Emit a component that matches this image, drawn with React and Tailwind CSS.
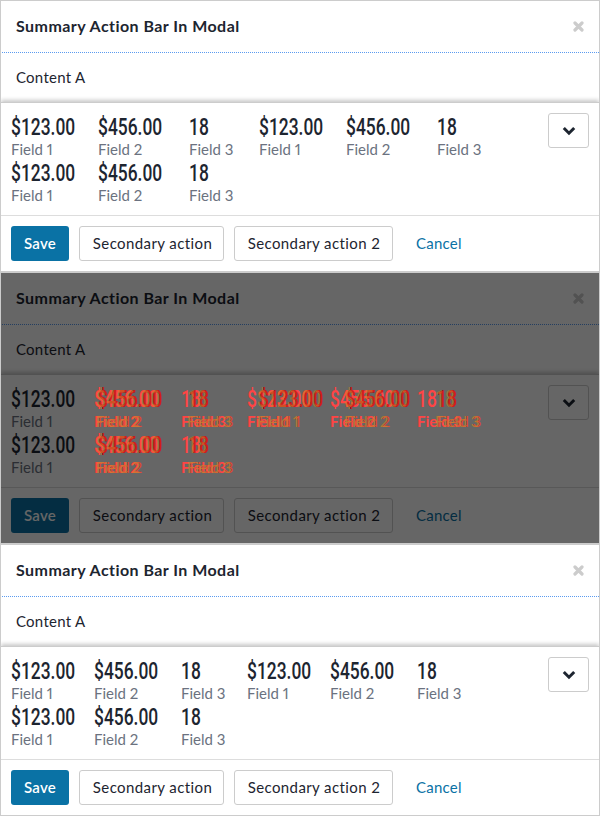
import React from "react";

const body = { fontFamily: '"Lato", "Noto Sans", sans-serif' };
const num = { fontFamily: '"Roboto", sans-serif' };

const ITEMS = [
  ["$123.00", "Field 1"], ["$456.00", "Field 2"], ["18", "Field 3"],
  ["$123.00", "Field 1"], ["$456.00", "Field 2"], ["18", "Field 3"],
  ["$123.00", "Field 1"], ["$456.00", "Field 2"], ["18", "Field 3"],
];

function Items({ wide, valueClass, labelClass, skipFirst }) {
  const widths = wide
    ? ["w-[87px]", "w-[91px]", "w-[70px]"]
    : ["w-[83px]", "w-[87px]", "w-[66px]"];
  return (
    <div className="flex w-[526px] flex-wrap pl-[11px]">
      {ITEMS.map(([v, l], i) => (
        <div key={i} className={`${widths[i % 3]} h-[46px] ${skipFirst && i % 6 === 0 ? "invisible" : ""}`}>
          <div className="h-[25px] whitespace-nowrap leading-[25px]">
            <span className={`inline-block origin-left scale-x-[0.725] text-[24px] font-medium leading-[27px] ${valueClass}`} style={num}>{v}</span>
          </div>
          <div className={`h-[21px] whitespace-nowrap text-[15px] leading-[21px] proportional-nums ${labelClass}`} style={body}>{l}</div>
        </div>
      ))}
    </div>
  );
}

function Panel({ wide, dimmed }) {
  return (
    <div className="relative h-[272px] overflow-hidden border border-[#ccc] bg-white text-[#1d2530]" style={body}>
      <div className="flex h-[51px] items-center justify-between pl-[15px] pr-[15px]">
        <span className="mb-[2px] text-[16px] font-bold tracking-[0.45px]">Summary Action Bar In Modal</span>
        <svg width="11" height="11" viewBox="0 0 11 11" className="text-[#ccc]" aria-hidden="true">
          <path d="M2 2L9 9M9 2L2 9" stroke="currentColor" strokeWidth="3.2" strokeLinecap="round" fill="none" />
        </svg>
      </div>
      <div className="relative -mx-px flex h-[50px] items-center pl-4 text-[15px] tracking-[0.25px]">
        <span className="absolute inset-x-0 top-0 h-px bg-[repeating-linear-gradient(90deg,#5b9bf0_0,#5b9bf0_1px,transparent_1px,transparent_2px)]" />
        <span className="absolute inset-y-0 left-0 w-px bg-[repeating-linear-gradient(180deg,#5b9bf0_0,#5b9bf0_1px,#ffffff_1px,#ffffff_2px)]" />
        <span className="absolute inset-y-0 right-0 w-px bg-[repeating-linear-gradient(180deg,#5b9bf0_0,#5b9bf0_1px,#ffffff_1px,#ffffff_2px)]" />
        Content A
      </div>
      <div className="relative z-10 border-t border-[#ccc] bg-white shadow-[0_-2px_4px_rgba(0,0,0,0.22)]">
        <div className="flex h-[112px] items-start justify-between pt-[10px]">
          <div className="-ml-px mt-px"><Items wide={wide} valueClass="text-[#1d2530]" labelClass="text-[#6b7280]" /></div>
          <button className="mr-[10px] flex h-[35px] w-[41px] items-center justify-center rounded-[3px] border border-[#ccc] bg-white">
            <svg width="14" height="10" viewBox="0 0 14 10" className="text-[#1d2530]" aria-hidden="true">
              <path d="M1.8 2L7 7.2L12.2 2" stroke="currentColor" strokeWidth="3" fill="none" />
            </svg>
          </button>
        </div>
        <div className="flex h-[56px] items-center gap-[10px] border-t border-[#ddd] pl-[10px]">
          <button className="h-[35px] w-[58px] rounded-[3px] bg-[#0a72a5] text-[15px] font-semibold tracking-[0.3px] text-white">Save</button>
          <button className="h-[35px] w-[145px] rounded-[3px] border border-[#ccc] bg-white pl-[2px] text-[15px] tracking-[0.4px]">Secondary action</button>
          <button className="h-[35px] w-[159px] rounded-[3px] border border-[#ccc] bg-white pl-[1px] text-[15px] tracking-[0.4px]">Secondary action 2</button>
          <button className="ml-[13px] text-[15px] tracking-[0.25px] text-[#0a72a5]">Cancel</button>
        </div>
      </div>
      {dimmed && (
        <>
          <div className="absolute -inset-px z-20 bg-black/60" />
          <div className="absolute left-[-1px] top-[113px] z-30">
            <Items wide={false} skipFirst valueClass="text-[#ff4444]" labelClass="font-bold text-[#ff4444]" />
          </div>
          <div className="absolute left-[-1px] top-[113px] z-30">
            <Items wide skipFirst valueClass="text-[#d41c1c]" labelClass="text-[#e0503a]" />
          </div>
          <div className="absolute left-[-3px] top-[113px] z-30">
            <Items wide skipFirst valueClass="text-[#c9862f] opacity-50" labelClass="text-[#c9862f] opacity-70" />
          </div>
        </>
      )}
    </div>
  );
}

export default function App() {
  return (
    <div className="h-[816px] w-[600px] overflow-hidden bg-white">
      <Panel wide />
      <Panel wide dimmed />
      <Panel />
    </div>
  );
}
